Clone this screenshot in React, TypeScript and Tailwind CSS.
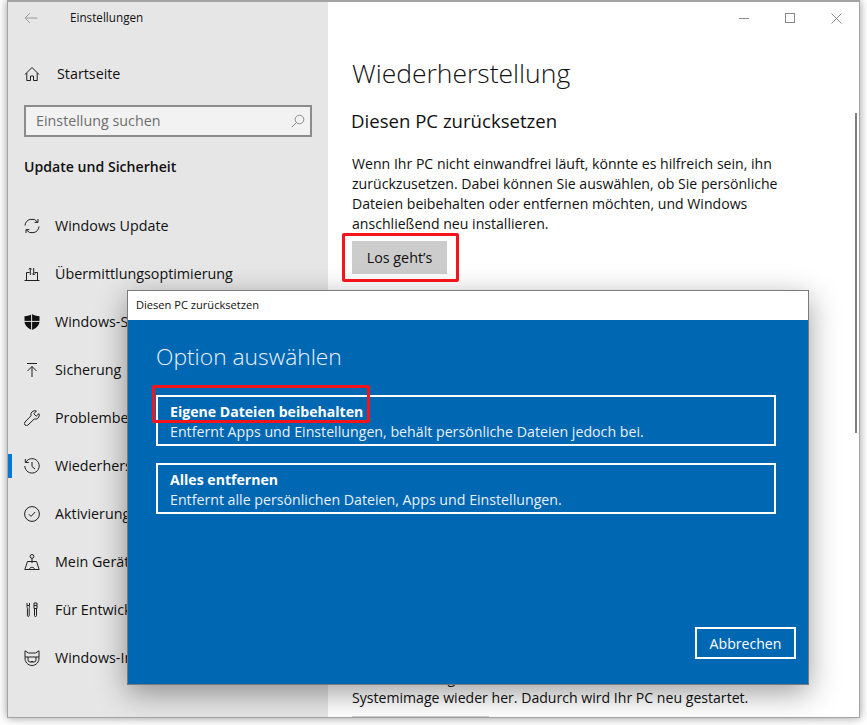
import React from "react";

const FONT = "font-['Open_Sans','Noto_Sans',sans-serif]";

const Icon = ({ children }: { children: React.ReactNode }) => (
  <svg width="16" height="16" viewBox="0 0 16 16" fill="none" stroke="#1f1f1f" strokeWidth="1" className="shrink-0">
    {children}
  </svg>
);

const HomeIcon = () => (
  <Icon>
    <path d="M1 8.500 8 1.500l7 7M2.800 7v7.500h3.700V10h3v4.500h3.700V7" />
  </Icon>
);
const SyncIcon = () => (
  <Icon>
    <path d="M1 7.500A7 7 0 0 1 13.600 4M15 8.500A7 7 0 0 1 2.400 12" />
    <path d="M14 1v3.400h-3.400M2 15v-3.400h3.400" />
  </Icon>
);
const DeliveryIcon = () => (
  <Icon>
    <path d="M0.500 14.500h15M2.500 14.500v-8h3M10.500 6.500h3v8" />
    <path d="M6.300 9V2M4.800 3.500l1.500-1.500 1.500 1.500M9.700 2v7M8.200 7.500 9.700 9l1.500-1.500" />
  </Icon>
);
const ShieldIcon = () => (
  <svg width="16" height="16" viewBox="0 0 16 16" className="shrink-0">
    <path d="M0.500 2.200C3.500 2.200 6 1.400 8 0c2 1.400 4.500 2.200 7.500 2.200v5c0 4-3.200 7-7.500 8.800-4.300-1.800-7.500-4.800-7.500-8.800z" fill="#111" />
    <path d="M7.600 0v16M0 7.400h16" stroke="#e6e6e6" strokeWidth="1" />
  </svg>
);
const BackupIcon = () => (
  <Icon>
    <path d="M3 1.500h10M8 15V4.500M3.500 9 8 4.500 12.500 9" />
  </Icon>
);
const WrenchIcon = () => (
  <Icon>
    <path d="M15 3.600 12.200 6.200 9.800 3.800 12.400 1A4 4 0 0 0 7 5.800L1 12a2 2 0 0 0 3 3l6.200-6A4 4 0 0 0 15 3.600z" />
  </Icon>
);
const HistoryIcon = () => (
  <Icon>
    <path d="M1.800 4.200A7.200 7.200 0 1 1 .8 8" />
    <path d="M1.300 1v3.500h3.500M8 4v4.500l3 2.500" />
  </Icon>
);
const CheckIcon = () => (
  <Icon>
    <circle cx="8" cy="8" r="7.400" />
    <path d="m4.800 8.200 2.200 2.200 4.200-4.400" />
  </Icon>
);
const FindIcon = () => (
  <Icon>
    <circle cx="8" cy="2.400" r="1.900" />
    <path d="M8 4.300V9M.8 15.500h14.400L12.500 7.500h-9zM5.500 15.500c0-3 5-3 5 0" />
  </Icon>
);
const DevIcon = () => (
  <Icon>
    <path d="M3 1v2.500h2.500V1M3 3.500C3 5.500 3.400 6 3.400 6.500v7a.9.9 0 0 0 1.800 0v-7c0-.5.3-1 .3-3" />
    <path d="M10 1h3v5.500h-3zM10.500 6.500v7a1 1 0 0 0 2 0v-7M10 3.500h3" />
  </Icon>
);
const InsiderIcon = () => (
  <Icon>
    <path d="M1 .8 4.500 3h7L15 .8v6.700c.4 4.500-3 8-7 8s-7.400-3.500-7-8z" />
    <path d="M1 7h14M4 7v3a2 2 0 0 0 2 2h4a2 2 0 0 0 2-2V7M5.500 9h.01M10.500 9h.01M7 11.500h2" />
  </Icon>
);

const NAV = [
  { label: "Windows Update", icon: <SyncIcon /> },
  { label: "Übermittlungsoptimierung", icon: <DeliveryIcon /> },
  { label: "Windows-Sicherheit", icon: <ShieldIcon /> },
  { label: "Sicherung", icon: <BackupIcon /> },
  { label: "Problembehandlung", icon: <WrenchIcon /> },
  { label: "Wiederherstellung", icon: <HistoryIcon />, active: true },
  { label: "Aktivierung", icon: <CheckIcon /> },
  { label: "Mein Gerät suchen", icon: <FindIcon /> },
  { label: "Für Entwickler", icon: <DevIcon /> },
  { label: "Windows-Insider-Programm", icon: <InsiderIcon /> },
];

const NavRow = ({ label, icon, active }: { label: string; icon: React.ReactNode; active?: boolean }) => (
  <div className="flex h-12 items-center">
    <div className={`h-6 w-1 shrink-0 ${active ? "bg-[#0078d7]" : ""}`} />
    <div className="ml-3 flex items-center gap-[15px] whitespace-nowrap text-[14.300px] text-[#111]">
      {icon}
      <span>{label}</span>
    </div>
  </div>
);

const OptionCard = ({ title, text }: { title: string; text: string }) => (
  <div className="h-[51px] border-2 border-white pl-3 pt-[5px] text-white">
    <div className="text-[14.100px] leading-5 font-bold">{title}</div>
    <div className="text-[14.200px] leading-5 text-[#e8f1f8]">{text}</div>
  </div>
);

export default function App() {
  return (
    <div className={`relative h-[725px] w-[867px] overflow-hidden bg-white ${FONT}`}>
      {/* Einstellungen-Fenster */}
      <div className="ml-[7px] flex h-[718px] w-[853px] overflow-hidden border border-t-2 border-[#a3a3a3] bg-white shadow-[0_0_9px_rgba(0,0,0,0.4)]">
        <aside className="w-[320px] shrink-0 bg-[#e6e6e6]">
          <div className="flex h-[32px] items-center pl-4 text-[11.700px] text-[#111]">
            <svg width="14" height="12" viewBox="0 0 14 12" fill="none" stroke="#9a9a9a" strokeWidth="1">
              <path d="M13.500 6H1M6 1 1 6l5 5" />
            </svg>
            <span className="ml-[32px]">Einstellungen</span>
          </div>
          <div className="mt-4 flex h-12 items-center gap-[17px] pl-4 text-[14.300px] text-[#111]">
            <HomeIcon />
            <span>Startseite</span>
          </div>
          <div className="mx-4 mt-[7px] flex h-8 w-[288px] items-center justify-between border-2 border-[#8c8c8c] bg-[#f2f2f2] pl-[10px] pr-[5px] text-[14.300px] text-[#6e6e6e]">
            <span>Einstellung suchen</span>
            <svg width="14" height="14" viewBox="0 0 14 14" fill="none" stroke="#8a8a8a" strokeWidth="1">
              <circle cx="8.500" cy="5.500" r="4.300" />
              <path d="M5.500 8.500.8 13.200" />
            </svg>
          </div>
          <div className="mt-5 pl-4 text-[14.100px] leading-5 font-semibold text-[#111]">Update und Sicherheit</div>
          <nav className="mt-[25px]">
            {NAV.map((item) => (
              <NavRow key={item.label} {...item} />
            ))}
          </nav>
        </aside>

        <main className="relative min-w-0 flex-1 overflow-hidden pl-6 text-[#111]">
          <div className="flex h-[32px] justify-end">
            {/* Fenstersteuerung */}
            {[
              <path key="m" d="M0 5.500h10" />,
              <rect key="r" x="0.500" y="0.500" width="9" height="9" />,
              <path key="c" d="m.5.5 10 10m0-10-10 10" />,
            ].map((glyph, i) => (
              <div key={i} className="flex w-[46px] items-center justify-center">
                <svg width="11" height="11" viewBox="0 0 11 11" fill="none" stroke="#8a8a8a" strokeWidth="1">
                  {glyph}
                </svg>
              </div>
            ))}
          </div>
          <h1 className="mt-[19px] text-[26.500px] leading-10 font-light text-[#111]">Wiederherstellung</h1>
          <h2 className="mt-[14px] -ml-px text-[18.600px] leading-7 text-[#111]">Diesen PC zurücksetzen</h2>
          <p className="mt-[19px] whitespace-nowrap text-[14.100px] leading-5">
            Wenn Ihr PC nicht einwandfrei läuft, könnte es hilfreich sein, ihn
            <br />
            zurückzusetzen. Dabei können Sie auswählen, ob Sie persönliche
            <br />
            Dateien beibehalten oder entfernen möchten, und Windows
            <br />
            anschließend neu installieren.
          </p>
          <button className="mt-[7px] flex h-[33px] w-[95px] items-center justify-center bg-[#cccccc] text-[14.300px]">
            Los geht’s
          </button>
          <p className="mt-[394px] whitespace-nowrap text-[14.100px] leading-5">
            Starteinstellungen, oder stellen Sie Windows von einem
            <br />
            Systemimage wieder her. Dadurch wird Ihr PC neu gestartet.
          </p>
          <div className="mt-2 h-[33px] w-[137px] bg-[#cccccc]" />
          {/* Scrollbar */}
          <div className="absolute right-[2px] top-[111px] h-[320px] w-[2px] bg-[#7f7f7f]" />
        </main>
      </div>

      {/* Dialog */}
      <div className="absolute left-[127px] top-[290px] h-[395px] w-[682px] border border-[#7a7a7a] bg-[#0067b3] shadow-[0_8px_28px_rgba(0,0,0,0.38)]">
        <div className="flex h-[29px] items-center bg-white pl-2 text-[11.100px] text-[#111]">Diesen PC zurücksetzen</div>
        <div className="px-7 pt-[19px]">
          <div className="text-[22.800px] leading-9 font-light text-[#eaf3fa]">Option auswählen</div>
          <div className="mt-5 flex w-[620px] flex-col gap-[17px]">
            <OptionCard title="Eigene Dateien beibehalten" text="Entfernt Apps und Einstellungen, behält persönliche Dateien jedoch bei." />
            <OptionCard title="Alles entfernen" text="Entfernt alle persönlichen Dateien, Apps und Einstellungen." />
          </div>
        </div>
        <button className="absolute bottom-[25px] right-[12px] flex h-8 w-[101px] items-center justify-center border-2 border-white pt-px text-[14.100px] text-white">
          Abbrechen
        </button>
      </div>

      {/* rote Markierungen */}
      <div className="absolute left-[342px] top-[233px] h-[49px] w-[117px] rounded-[2px] border-[3px] border-[#f5141c]" />
      <div className="absolute left-[152px] top-[385px] h-[38px] w-[218px] rounded-[2px] border-[3px] border-[#f5141c]" />
    </div>
  );
}
